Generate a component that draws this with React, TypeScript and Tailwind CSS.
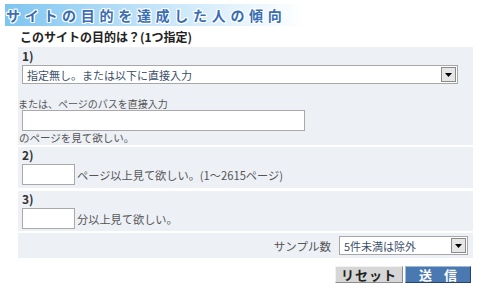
import { useState } from 'react';

const font = { fontFamily: '"Noto Sans CJK JP", "Noto Sans", sans-serif' };

function FakeSelect({ value, className }: { value: string; className: string }) {
  return (
    <div className={`flex items-center bg-white border border-[#a7a7a7] ${className}`}>
      <span className="flex-1 pl-[4px] text-[11px] leading-[16px] text-[#3c4f6a] whitespace-nowrap overflow-hidden">{value}</span>
      <span className="w-[15px] h-[15px] mr-[1px] flex items-center justify-center bg-[#e6e6e6] border border-[#8a8a8a]">
        <svg width="7" height="4" viewBox="0 0 7 4">
          <path d="M0 0h7L3.5 4z" fill="#000" />
        </svg>
      </span>
    </div>
  );
}

export default function App() {
  const [path, setPath] = useState('');
  const [pages, setPages] = useState('');
  const [mins, setMins] = useState('');

  return (
    <div className="w-[499px] h-[291px] bg-white text-[#555] overflow-hidden" style={font}>
      <div className="pt-[4px] pl-[5px]">
        <div
          className="w-[300px] h-[22px] flex items-center pl-[1px] bg-linear-to-r from-[#7cc5f1] via-[#c4e4f8] to-white text-[14px] font-bold tracking-[4.7px] text-[#3a6eb3] leading-none whitespace-nowrap"
          style={{ textShadow: '1px 0 #fff, -1px 0 #fff, 0 1px #fff, 0 -1px #fff, 1px 1px #fff, -1px -1px #fff, 1px -1px #fff, -1px 1px #fff' }}
        >
          サイトの目的を達成した人の傾向
        </div>
      </div>

      <div className="ml-[18px] w-[455px]">
        <div className="h-[21px] pt-[4px] pl-[2px] text-[12px] leading-[14px] font-bold text-[#222]">
          このサイトの目的は？(1つ指定)
        </div>

        <div className="flex flex-col gap-[2px] text-[11.2px]">
          <div className="bg-[#edf0f5] h-[98px] pl-[4px] pt-[2px]">
            <div className="text-[12px] leading-[14px] font-bold text-[#333]">1)</div>
            <FakeSelect value="指定無し。または以下に直接入力" className="mt-[2px] w-[436px] h-[19px]" />
            <div className="-ml-[4px] mt-[13px] text-[10px] leading-[13px]">または、ページのパスを直接入力</div>
            <input
              value={path}
              onChange={(e) => setPath(e.target.value)}
              className="block w-[283px] h-[21px] bg-white border border-[#a9a9a9] outline-none"
            />
            <div className="-ml-[3px] text-[10.5px] leading-[14px]">のページを見て欲しい。</div>
          </div>

          <div className="bg-[#edf0f5] h-[41px] pl-[4px] pt-[1px] mb-[1px]">
            <div className="text-[12px] leading-[14px] font-bold text-[#333]">2)</div>
            <div className="flex items-center mt-[2px]">
              <input
                value={pages}
                onChange={(e) => setPages(e.target.value)}
                className="block w-[53px] h-[21px] bg-white border border-[#a9a9a9] outline-none"
              />
              <span className="ml-[2px] leading-[14px]">ページ以上見て欲しい。(1～2615ページ)</span>
            </div>
          </div>

          <div className="bg-[#edf0f5] h-[40px] pl-[4px] pt-[1px]">
            <div className="text-[12px] leading-[14px] font-bold text-[#333]">3)</div>
            <div className="flex items-center mt-[2px]">
              <input
                value={mins}
                onChange={(e) => setMins(e.target.value)}
                className="block w-[53px] h-[21px] bg-white border border-[#a9a9a9] outline-none"
              />
              <span className="ml-[2px] leading-[14px]">分以上見て欲しい。</span>
            </div>
          </div>

          <div className="bg-[#edf0f5] h-[25px] flex items-center justify-end pr-[5px]">
            <span className="mr-[8px] text-[11.5px] leading-[14px]">サンプル数</span>
            <FakeSelect value="5件未満は除外" className="w-[129px] h-[19px]" />
          </div>
        </div>

        <div className="flex justify-end gap-[2px] mt-[8px] pr-[2px]">
          <button className="w-[68px] h-[17px] flex items-center justify-center bg-[#d6d6d6] border border-t-[#f2f2f2] border-l-[#f2f2f2] border-r-[#8c8c8c] border-b-[#8c8c8c] text-[13px] font-bold leading-none text-[#222] tracking-[1px]">
            リセット
          </button>
          <button className="w-[66px] h-[17px] flex items-center justify-center bg-[#4a78b0] border border-t-[#9cb8da] border-l-[#9cb8da] border-r-[#24446c] border-b-[#24446c] text-[13px] font-bold leading-none text-white tracking-[12px] pl-[12px]">
            送信
          </button>
        </div>
      </div>
    </div>
  );
}
